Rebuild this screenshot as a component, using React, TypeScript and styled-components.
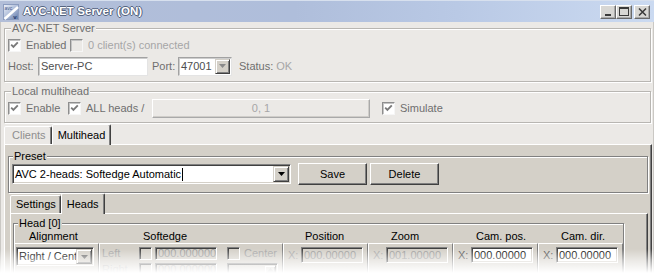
import React from 'react';
import styled, { createGlobalStyle } from 'styled-components';

const LIGHT = '#ebe9e6';
const FACE = '#d4d0c8';
const SHADOW = '#808080';
const DARK = '#404040';
const SOFT_TEXT = '#6f6f6f';
const MUTED_TEXT = '#a6a6a6';

const GlobalStyle = createGlobalStyle`
  html, body { margin: 0; padding: 0; background: #fff; }
  body {
    font-family: 'Liberation Sans', Arial, sans-serif;
    font-size: 11px;
    line-height: 13px;
    color: #000;
  }
  * { box-sizing: border-box; }
`;

const Stage = styled.div`
  position: relative;
  width: 656px;
  height: 275px;
  overflow: hidden;
  background: #fff;
`;

const Fade = styled.div`
  position: absolute;
  left: 0;
  right: 0;
  bottom: 0;
  height: 26px;
  background: linear-gradient(
    to bottom,
    rgba(255, 255, 255, 0) 0%,
    rgba(255, 255, 255, 0.55) 45%,
    #fff 92%
  );
  pointer-events: none;
`;

const Window = styled.div`
  width: 654px;
  display: flex;
  flex-direction: column;
`;

const TitleBar = styled.div`
  height: 22px;
  display: flex;
  align-items: center;
  padding: 0 4px 0 3px;
  background: linear-gradient(to right, #b2bed8 0%, #afbedb 45%, #b9c9e5 70%, #cbdaf1 100%);
  border-top: 1px solid #d7e0ee;
`;

const TitleText = styled.span`
  margin-left: 4px;
  font-weight: bold;
  font-size: 11.5px;
  color: #fff;
  letter-spacing: 0.1px;
  text-shadow: 1px 0 0 #55647f, -1px 0 0 #55647f, 0 1px 0 #55647f, 0 -1px 0 #55647f;
`;

const CaptionButtons = styled.div`
  margin-left: auto;
  display: flex;
`;

const CaptionButton = styled.span<{ $gap?: number }>`
  width: 16px;
  height: 14px;
  margin-left: ${p => p.$gap ?? 0}px;
  background: #d8d7d4;
  border: 1px solid;
  border-color: #fff #6a6a6a #6a6a6a #fff;
  box-shadow: inset -1px -1px 0 #a9a9a9;
  display: flex;
  align-items: center;
  justify-content: center;
`;

const Body = styled.div`
  background: ${LIGHT};
  border-left: 1px solid #cac8c4;
  border-right: 1px solid #cac8c4;
  padding: 0 1px 0 3px;
  display: flex;
  flex-direction: column;
`;

const Group = styled.fieldset<{ $tone: 'light' | 'face'; $top?: number; $w?: number; $pl?: number; $pb: number }>`
  margin: ${p => p.$top ?? 0}px 1px 0 0;
  padding: 0 3px ${p => p.$pb}px ${p => p.$pl ?? 3}px;
  min-width: 0;
  ${p => (p.$w ? `width: ${p.$w}px;` : '')}
  border: 1px solid ${p => (p.$tone === 'light' ? '#b8b6b2' : SHADOW)};
  box-shadow: inset 1px 1px 0 #fff, 1px 1px 0 #fff;
  background: ${p => (p.$tone === 'light' ? LIGHT : FACE)};
`;

const Legend = styled.legend<{ $ml: number; $color?: string }>`
  margin-left: ${p => p.$ml}px;
  padding: 0 1px;
  line-height: 13px;
  background: inherit;
  color: ${p => p.$color ?? '#000'};
`;

const FormRow = styled.div<{ $cols: string; $h: number; $mt?: number }>`
  display: grid;
  grid-template-columns: ${p => p.$cols};
  align-items: center;
  height: ${p => p.$h}px;
  margin-top: ${p => p.$mt ?? 0}px;
`;

const Label = styled.span<{ $color?: string }>`
  color: ${p => p.$color ?? '#000'};
  white-space: nowrap;
`;

const CheckItem = styled.span<{ $color: string }>`
  display: flex;
  align-items: center;
  gap: 5px;
  color: ${p => p.$color};
  white-space: nowrap;
`;

const CheckBox = styled.span<{ $blank?: boolean; $face?: boolean }>`
  width: 13px;
  height: 13px;
  flex: none;
  display: flex;
  align-items: center;
  justify-content: center;
  border: 1px solid;
  border-color: ${p => (p.$face ? '#808080 #fff #fff #808080' : '#8e8e8e #f6f6f6 #f6f6f6 #8e8e8e')};
  box-shadow: inset 1px 1px 0 ${p => (p.$face ? DARK : '#c4c4c4')};
  background: ${p => (p.$blank ? 'transparent' : '#fff')};
`;

const Check: React.FC<{ checked?: boolean; blank?: boolean; face?: boolean }> = ({ checked, blank, face }) => (
  <CheckBox $blank={blank} $face={face}>
    {checked && (
      <svg width="9" height="9" viewBox="0 0 9 9">
        <path d="M1.2 3.6 L3.4 5.8 L7.8 1.4" fill="none" stroke="#7a7a7a" strokeWidth="1.9" />
      </svg>
    )}
  </CheckBox>
);

type Tone = 'soft' | 'normal' | 'disabled';

const Field = styled.div<{ $w: number; $h: number; $tone: Tone; $combo?: boolean }>`
  width: ${p => p.$w}px;
  height: ${p => p.$h}px;
  flex: none;
  display: flex;
  align-items: center;
  padding: ${p => (p.$combo ? '1px' : '0 2px')};
  border: 1px solid;
  border-color: ${p => (p.$tone === 'soft' ? '#a2a2a2 #e4e4e4 #e4e4e4 #a2a2a2' : '#808080 #fff #fff #808080')};
  box-shadow: ${p =>
    p.$tone === 'soft'
      ? 'inset 1px 1px 0 #cdcdcd'
      : `inset 1px 1px 0 ${DARK}, inset -1px -1px 0 ${FACE}`};
  background: ${p => (p.$tone === 'disabled' ? FACE : '#fff')};
  color: ${p => (p.$tone === 'disabled' ? '#9c9c9c' : p.$tone === 'soft' ? '#4e4e4e' : '#000')};
  overflow: hidden;
  white-space: nowrap;
`;

const FieldText = styled.span`
  flex: 1;
  min-width: 0;
  overflow: hidden;
  padding-left: 1px;
  white-space: nowrap;
`;

const Caret = styled.span`
  display: inline-block;
  width: 1px;
  height: 13px;
  margin-left: 1px;
  vertical-align: top;
  background: #000;
`;

const DropButton = styled.span<{ $w?: number }>`
  width: ${p => p.$w ?? 16}px;
  align-self: stretch;
  flex: none;
  background: ${FACE};
  border: 1px solid;
  border-color: ${FACE} ${DARK} ${DARK} ${FACE};
  box-shadow: inset 1px 1px 0 #fff, inset -1px -1px 0 ${SHADOW};
  display: flex;
  align-items: center;
  justify-content: center;
`;

const Arrow: React.FC<{ color: string; up?: boolean }> = ({ color, up }) => (
  <svg width="7" height="4" viewBox="0 0 7 4">
    <polygon points={up ? '0,4 7,4 3.5,0' : '0,0 7,0 3.5,4'} fill={color} />
  </svg>
);

const PushButton = styled.span<{ $w: number; $h: number; $muted?: boolean }>`
  width: ${p => p.$w}px;
  height: ${p => p.$h}px;
  display: flex;
  align-items: center;
  justify-content: center;
  color: ${p => (p.$muted ? MUTED_TEXT : '#000')};
  background: ${p => (p.$muted ? LIGHT : FACE)};
  border: 1px solid;
  border-color: ${p => (p.$muted ? '#fff #a9a9a9 #a9a9a9 #fff' : `#fff ${DARK} ${DARK} #fff`)};
  box-shadow: inset -1px -1px 0 ${p => (p.$muted ? '#cfcdc9' : SHADOW)};
`;

const TabStrip = styled.div<{ $ml?: number; $mt?: number }>`
  display: flex;
  align-items: flex-end;
  height: 20px;
  margin: ${p => p.$mt ?? 0}px 0 0 ${p => p.$ml ?? 0}px;
`;

const Tab = styled.div<{ $active?: boolean; $bg: string; $color: string; $pl?: number; $pr?: number }>`
  position: relative;
  z-index: ${p => (p.$active ? 1 : 0)};
  height: ${p => (p.$active ? 21 : 18)}px;
  margin-bottom: ${p => (p.$active ? -1 : 0)}px;
  padding: 0 ${p => p.$pr ?? (p.$active ? 5 : 3)}px 0 ${p => p.$pl ?? 5}px;
  display: flex;
  align-items: center;
  color: ${p => p.$color};
  background: ${p => p.$bg};
  border: 1px solid;
  border-bottom: none;
  border-color: #fff ${DARK} transparent #fff;
  box-shadow: inset -1px 0 0 ${SHADOW};
  border-radius: 2px 2px 0 0;
  white-space: nowrap;
`;

const TabPanel = styled.div<{ $pt: number; $pl: number; $pr: number; $ml?: number }>`
  margin-left: ${p => p.$ml ?? 0}px;
  background: ${FACE};
  border-top: 1px solid #fff;
  border-left: 1px solid #fff;
  border-right: 1px solid ${DARK};
  box-shadow: inset -1px 0 0 ${SHADOW};
  padding: ${p => p.$pt}px ${p => p.$pr}px 12px ${p => p.$pl}px;
  display: flex;
  flex-direction: column;
`;

const PresetRow = styled.div`
  display: flex;
  align-items: center;
  height: 22px;
`;

const PresetButtons = styled.div`
  display: flex;
  gap: 3px;
  margin-left: 7px;
`;

const HeadGrid = styled.div`
  display: grid;
  grid-template-columns: 85px 184px 85px 85px 85px 85px;
`;

const ColHeader = styled.div<{ $pl: number }>`
  height: 13px;
  padding-left: ${p => p.$pl}px;
  white-space: nowrap;
`;

const ColBody = styled.div<{ $pl: number }>`
  height: 44px;
  padding: 3px 0 0 ${p => p.$pl}px;
  border-top: 1px solid #fff;
  border-left: 1px solid #fff;
  border-right: 1px solid ${SHADOW};
`;

const SoftGrid = styled.div`
  display: grid;
  grid-template-columns: 37px 16px 72px 17px auto;
  grid-auto-rows: 16px;
  align-items: start;
`;

const XRow = styled.div`
  display: flex;
  align-items: center;
  height: 16px;
`;

const XLabel = styled.span<{ $color: string }>`
  width: 13px;
  flex: none;
  color: ${p => p.$color};
`;

const SpinBox = styled.div`
  grid-column: 4 / span 2;
  width: 51px;
  height: 13px;
  display: flex;
  justify-content: flex-end;
  padding: 1px;
  border: 1px solid;
  border-color: #808080 #fff #fff #808080;
  box-shadow: inset 1px 1px 0 ${DARK};
`;

const AppIcon = () => (
  <svg width="16" height="16" viewBox="0 0 16 16">
    <defs>
      <linearGradient id="appicon" x1="0" y1="0" x2="1" y2="1">
        <stop offset="0" stopColor="#eef2f9" />
        <stop offset="0.55" stopColor="#a9b8d6" />
        <stop offset="1" stopColor="#5f77a6" />
      </linearGradient>
    </defs>
    <rect x="0.5" y="0.5" width="15" height="15" fill="url(#appicon)" stroke="#8b9cbf" />
    <path d="M1.5 15 L15 3" stroke="#fff" strokeWidth="2.4" />
    <text x="1.5" y="6" fontSize="5" fill="#44588a" fontFamily="Liberation Sans, sans-serif">avc</text>
    <text x="10.2" y="14.6" fontSize="6" fontWeight="bold" fill="#23386a" fontFamily="Liberation Sans, sans-serif">v</text>
  </svg>
);

const MinIcon = () => (
  <svg width="8" height="8" viewBox="0 0 8 8">
    <rect x="1" y="6" width="6" height="2" fill="#3a3a3a" />
  </svg>
);

const MaxIcon = () => (
  <svg width="10" height="9" viewBox="0 0 10 9">
    <rect x="0.5" y="0.5" width="9" height="8" fill="none" stroke="#3a3a3a" />
    <rect x="0" y="0" width="10" height="2" fill="#3a3a3a" />
  </svg>
);

const CloseIcon = () => (
  <svg width="9" height="8" viewBox="0 0 9 8">
    <path d="M1 0.5 L8 7.5 M8 0.5 L1 7.5" stroke="#3a3a3a" strokeWidth="1.5" />
  </svg>
);

const columnHeaders: { title: string; pad: number }[] = [
  { title: 'Alignment', pad: 15 },
  { title: 'Softedge', pad: 44 },
  { title: 'Position', pad: 22 },
  { title: 'Zoom', pad: 23 },
  { title: 'Cam. pos.', pad: 23 },
  { title: 'Cam. dir.', pad: 23 },
];

const vectorColumns: { value: string; enabled: boolean }[] = [
  { value: '000.00000', enabled: false },
  { value: '001.00000', enabled: false },
  { value: '000.00000', enabled: true },
  { value: '000.00000', enabled: true },
];

export default function App() {
  return (
    <Stage>
      <GlobalStyle />
      <Window>
        <TitleBar>
          <AppIcon />
          <TitleText>AVC-NET Server (ON)</TitleText>
          <CaptionButtons>
            <CaptionButton><MinIcon /></CaptionButton>
            <CaptionButton><MaxIcon /></CaptionButton>
            <CaptionButton $gap={2}><CloseIcon /></CaptionButton>
          </CaptionButtons>
        </TitleBar>

        <Body>
          <Group $tone="light" $pb={5}>
            <Legend $ml={3} $color={SOFT_TEXT}>AVC-NET Server</Legend>
            <FormRow $cols="62px auto" $h={20}>
              <CheckItem $color={SOFT_TEXT}>
                <Check checked />
                Enabled
              </CheckItem>
              <CheckItem $color={MUTED_TEXT}>
                <Check blank />
                0 client(s) connected
              </CheckItem>
            </FormRow>
            <FormRow $cols="30px 114px 26px 61px auto" $h={20} $mt={1}>
              <Label $color={SOFT_TEXT}>Host:</Label>
              <Field $w={110} $h={19} $tone="soft">Server-PC</Field>
              <Label $color={SOFT_TEXT}>Port:</Label>
              <Field $w={54} $h={19} $tone="soft" $combo>
                <FieldText>47001</FieldText>
                <DropButton $w={15}><Arrow color="#8a8a8a" /></DropButton>
              </Field>
              <Label $color={SOFT_TEXT}>
                Status: <Label $color={MUTED_TEXT}>OK</Label>
              </Label>
            </FormRow>
          </Group>

          <Group $tone="light" $top={3} $pb={4}>
            <Legend $ml={3} $color={SOFT_TEXT}>Local multihead</Legend>
            <FormRow $cols="60px 84px 230px auto" $h={20}>
              <CheckItem $color={SOFT_TEXT}>
                <Check checked />
                Enable
              </CheckItem>
              <CheckItem $color={SOFT_TEXT}>
                <Check checked />
                ALL heads /
              </CheckItem>
              <PushButton $w={218} $h={19} $muted>0, 1</PushButton>
              <CheckItem $color={SOFT_TEXT}>
                <Check checked />
                Simulate
              </CheckItem>
            </FormRow>
          </Group>

          <TabStrip $mt={1}>
            <Tab $bg={LIGHT} $color="#8e8e8e" $pl={7} $pr={5}>Clients</Tab>
            <Tab $bg={LIGHT} $color="#000" $active>Multihead</Tab>
          </TabStrip>
          <TabPanel $pt={5} $pl={3} $pr={3}>
            <Group $tone="face" $w={640} $pb={7} $pl={3}>
              <Legend $ml={1}>Preset</Legend>
              <PresetRow>
                <Field $w={279} $h={20} $tone="normal" $combo>
                  <FieldText>
                    AVC 2-heads: Softedge Automatic
                    <Caret />
                  </FieldText>
                  <DropButton><Arrow color="#000" /></DropButton>
                </Field>
                <PresetButtons>
                  <PushButton $w={69} $h={22}>Save</PushButton>
                  <PushButton $w={69} $h={22}>Delete</PushButton>
                </PresetButtons>
              </PresetRow>
            </Group>

            <TabStrip $ml={2}>
              <Tab $bg={FACE} $color="#000" $pr={4}>Settings</Tab>
              <Tab $bg={FACE} $color="#000" $active>Heads</Tab>
            </TabStrip>
            <TabPanel $ml={2} $pt={3} $pl={2} $pr={2}>
              <Group $tone="face" $w={611} $pl={0} $pb={0}>
                <Legend $ml={4}>Head [0]</Legend>
                <HeadGrid>
                  {columnHeaders.map(h => (
                    <ColHeader key={h.title} $pl={h.pad}>{h.title}</ColHeader>
                  ))}

                  <ColBody $pl={1}>
                    <Field $w={78} $h={19} $tone="normal" $combo>
                      <FieldText>Right / Center</FieldText>
                      <DropButton><Arrow color="#6b6b6b" /></DropButton>
                    </Field>
                  </ColBody>

                  <ColBody $pl={2}>
                    <SoftGrid>
                      <Label $color={MUTED_TEXT}>Left</Label>
                      <Check blank face />
                      <Field $w={62} $h={13} $tone="disabled">000.000000</Field>
                      <Check blank face />
                      <Label $color={MUTED_TEXT}>Center</Label>

                      <Label $color={MUTED_TEXT}>Right</Label>
                      <Check blank face />
                      <Field $w={62} $h={13} $tone="disabled">000.000000</Field>
                      <SpinBox>
                        <DropButton $w={12}><Arrow color="#9c9c9c" up /></DropButton>
                      </SpinBox>
                    </SoftGrid>
                  </ColBody>

                  {vectorColumns.map((c, i) => (
                    <ColBody key={i} $pl={4}>
                      <XRow>
                        <XLabel $color={c.enabled ? '#505050' : MUTED_TEXT}>X:</XLabel>
                        <Field $w={62} $h={16} $tone={c.enabled ? 'normal' : 'disabled'}>
                          {c.value}
                        </Field>
                      </XRow>
                    </ColBody>
                  ))}
                </HeadGrid>
              </Group>
            </TabPanel>
          </TabPanel>
        </Body>
      </Window>
      <Fade />
    </Stage>
  );
}
